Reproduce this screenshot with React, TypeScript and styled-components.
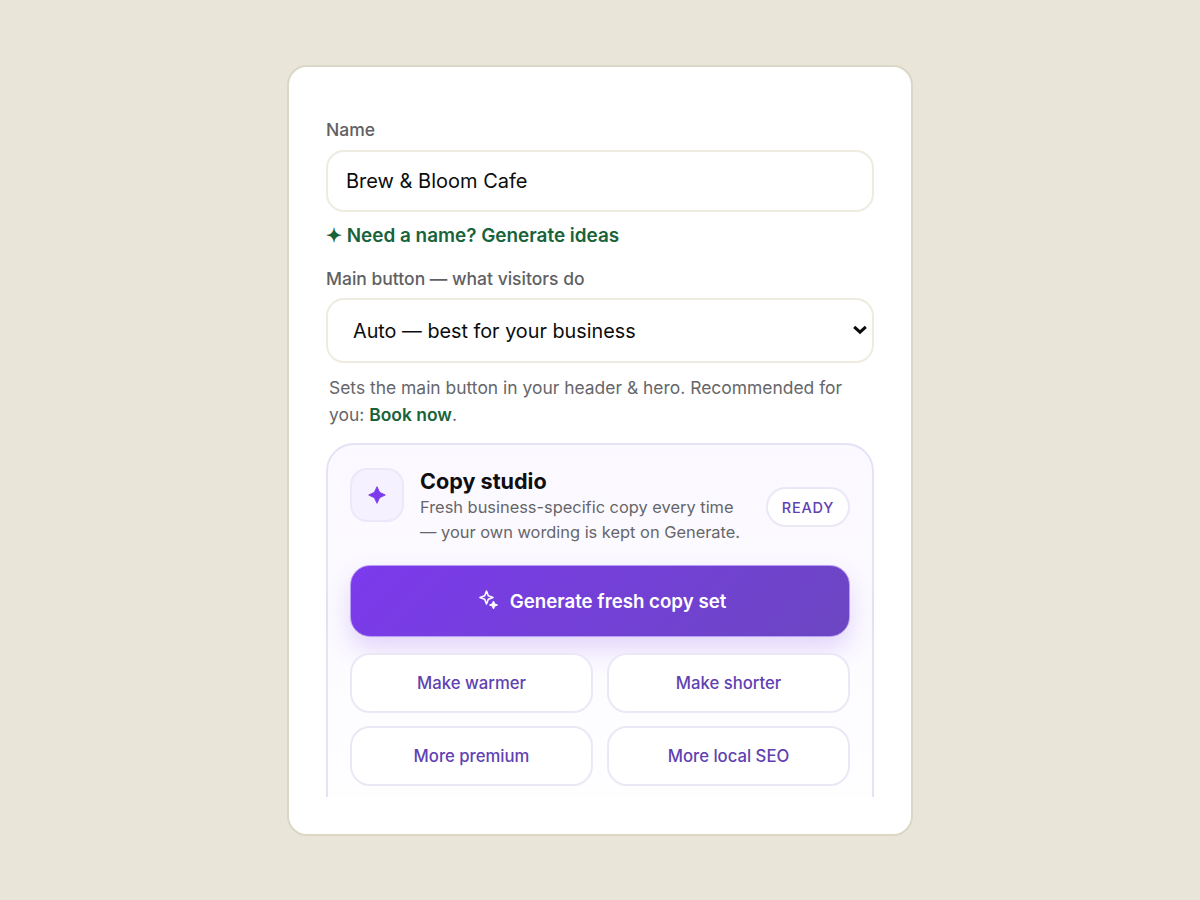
import React from "react";
import styled, { createGlobalStyle } from "styled-components";

const Global = createGlobalStyle`
  html, body { margin: 0; padding: 0; height: 100%; }
  body { background: #e9e5d9; font-family: "Inter", "Liberation Sans", sans-serif; }
  #root { height: 100%; }
  * { box-sizing: border-box; }
`;

const Page = styled.div`
  height: 900px;
  display: flex;
  align-items: center;
  justify-content: center;
`;

const Card = styled.div`
  width: 626px;
  height: 771px;
  margin-top: 1px;
  background: #fff;
  border: 2px solid #dbd7c6;
  border-radius: 20px;
  padding: 36px 37px 35px;
`;

const Scroller = styled.div`
  height: 694px;
  overflow: hidden;
`;

const Label = styled.label`
  display: block;
  font-size: 17.5px;
  line-height: 22px;
  font-weight: 500;
  color: #5f6064;
  margin: 16px 0 9px;
`;

const TextInput = styled.input`
  display: block;
  width: 100%;
  height: 62px;
  padding: 0 18px;
  border: 2px solid #eeebe1;
  border-radius: 18px;
  background: #fff;
  color: #0c0c0c;
  font: 400 20px "Inter", sans-serif;
  outline: none;
`;

const IdeaLink = styled.a`
  display: block;
  margin-top: 12px;
  font-size: 18.9px;
  line-height: 24px;
  font-weight: 600;
  color: #19633a;
`;

const SelectLabel = styled(Label)`
  margin: 20px 0 8px;
`;

const SelectWrap = styled.div`
  position: relative;
`;

const Select = styled.select`
  display: block;
  width: 100%;
  height: 65px;
  padding: 0 25px;
  appearance: none;
  border: 2px solid #eeebe1;
  border-radius: 18px;
  background: #fff;
  color: #0c0c0c;
  font: 400 19.8px "Inter", sans-serif;
  outline: none;
`;

const Chevron = styled.svg`
  position: absolute;
  right: 7px;
  top: 27px;
  pointer-events: none;
`;

const Hint = styled.p`
  margin: 11px 0 0;
  padding: 0 3px;
  font-size: 17.45px;
  line-height: 27px;
  color: #66666a;
`;

const HintStrong = styled.strong`
  font-weight: 600;
  color: #19633a;
`;

const Panel = styled.section`
  margin-top: 15px;
  padding: 23px 22px 60px;
  border: 2px solid #e6e2f5;
  border-radius: 28px;
  background: linear-gradient(180deg, #fbf9ff 0%, #fcfbff 50%, #ffffff 100%);
`;

const PanelHead = styled.div`
  display: flex;
  align-items: flex-start;
  gap: 16px;
`;

const IconTile = styled.div`
  flex: none;
  width: 54px;
  height: 54px;
  border-radius: 17px;
  border: 2px solid #ece8f9;
  background: #f5f1fe;
  display: flex;
  align-items: center;
  justify-content: center;
`;

const HeadText = styled.div`
  flex: 1;
  min-width: 0;
`;

const Title = styled.h3`
  margin: 0;
  font-size: 21.6px;
  line-height: 26px;
  font-weight: 700;
  color: #0f0f12;
`;

const Subtitle = styled.p`
  margin: 1px 0 0;
  font-size: 16.4px;
  line-height: 25px;
  color: #66666a;
`;

const Badge = styled.span`
  flex: none;
  align-self: center;
  margin-top: 1px;
  width: 84px;
  height: 40px;
  border-radius: 20px;
  border: 2px solid #ebe7f7;
  background: #fff;
  color: #5f41b2;
  font-size: 14.5px;
  font-weight: 500;
  letter-spacing: 0.8px;
  display: flex;
  align-items: center;
  justify-content: center;
`;

const PrimaryButton = styled.button`
  display: flex;
  margin-top: 20px;
  height: 72px;
  width: 100%;
  border: 1px solid #b79df3;
  border-radius: 20px;
  background: linear-gradient(135deg, #7c3aed 0%, #6b46c1 100%);
  box-shadow: 0 12px 26px rgba(124, 58, 237, 0.2);
  color: #fff;
  font: 600 18.7px "Inter", sans-serif;
  align-items: center;
  justify-content: center;
  gap: 12px;
`;

const Grid = styled.div`
  margin-top: 16px;
  display: grid;
  grid-template-columns: 1fr 1fr;
  gap: 13px 14px;
`;

const ChoiceButton = styled.button`
  height: 60px;
  border: 2px solid #ebe7f5;
  border-radius: 20px;
  background: #fff;
  color: #5f41b2;
  font: 500 16.7px "Inter", sans-serif;
`;

const Star = ({ size, color }: { size: number; color: string }) => (
  <svg width={size} height={size} viewBox="0 0 24 24" fill={color} stroke={color} strokeWidth="1" strokeLinejoin="round">
    <path d="M12 2 L15.200 8.800 L22 12 L15.200 15.200 L12 22 L8.800 15.200 L2 12 L8.800 8.800Z" />
  </svg>
);

const Sparkles = () => (
  <svg width="24" height="24" viewBox="-5 -1 24 24" fill="none" stroke="#fff" strokeWidth="1.6" strokeLinejoin="round">
    <path d="M7.500 1 L9.300 5.700 L14 7.500 L9.300 9.300 L7.500 14 L5.700 9.300 L1 7.500 L5.700 5.700Z" />
    <path fill="#fff" strokeWidth="1" d="M14.500 11 L15.700 13.800 L18.500 15 L15.700 16.200 L14.500 19 L13.300 16.200 L10.500 15 L13.300 13.800Z" />
  </svg>
);

export default function App() {
  return (
    <Page>
      <Global />
      <Card>
        <Scroller>
          <Label>Name</Label>
          <TextInput defaultValue="Brew & Bloom Cafe" />
          <IdeaLink>✦ Need a name? Generate ideas</IdeaLink>
          <SelectLabel>Main button — what visitors do</SelectLabel>
          <SelectWrap>
            <Select defaultValue="auto">
              <option value="auto">Auto — best for your business</option>
            </Select>
            <Chevron width="14" height="10" viewBox="0 0 14 10" fill="none" stroke="#0c0c0c" strokeWidth="3">
              <path d="M1.200 1.800 L7 7.200 L12.800 1.800" />
            </Chevron>
          </SelectWrap>
          <Hint>
            Sets the main button in your header &amp; hero. Recommended for you: <HintStrong>Book now</HintStrong>.
          </Hint>
          <Panel>
            <PanelHead>
              <IconTile>
                <Star size={20} color="#7c3aed" />
              </IconTile>
              <HeadText>
                <Title>Copy studio</Title>
                <Subtitle>Fresh business-specific copy every time — your own wording is kept on Generate.</Subtitle>
              </HeadText>
              <Badge>READY</Badge>
            </PanelHead>
            <PrimaryButton>
              <Sparkles />
              Generate fresh copy set
            </PrimaryButton>
            <Grid>
              <ChoiceButton>Make warmer</ChoiceButton>
              <ChoiceButton>Make shorter</ChoiceButton>
              <ChoiceButton>More premium</ChoiceButton>
              <ChoiceButton>More local SEO</ChoiceButton>
            </Grid>
          </Panel>
        </Scroller>
      </Card>
    </Page>
  );
}
